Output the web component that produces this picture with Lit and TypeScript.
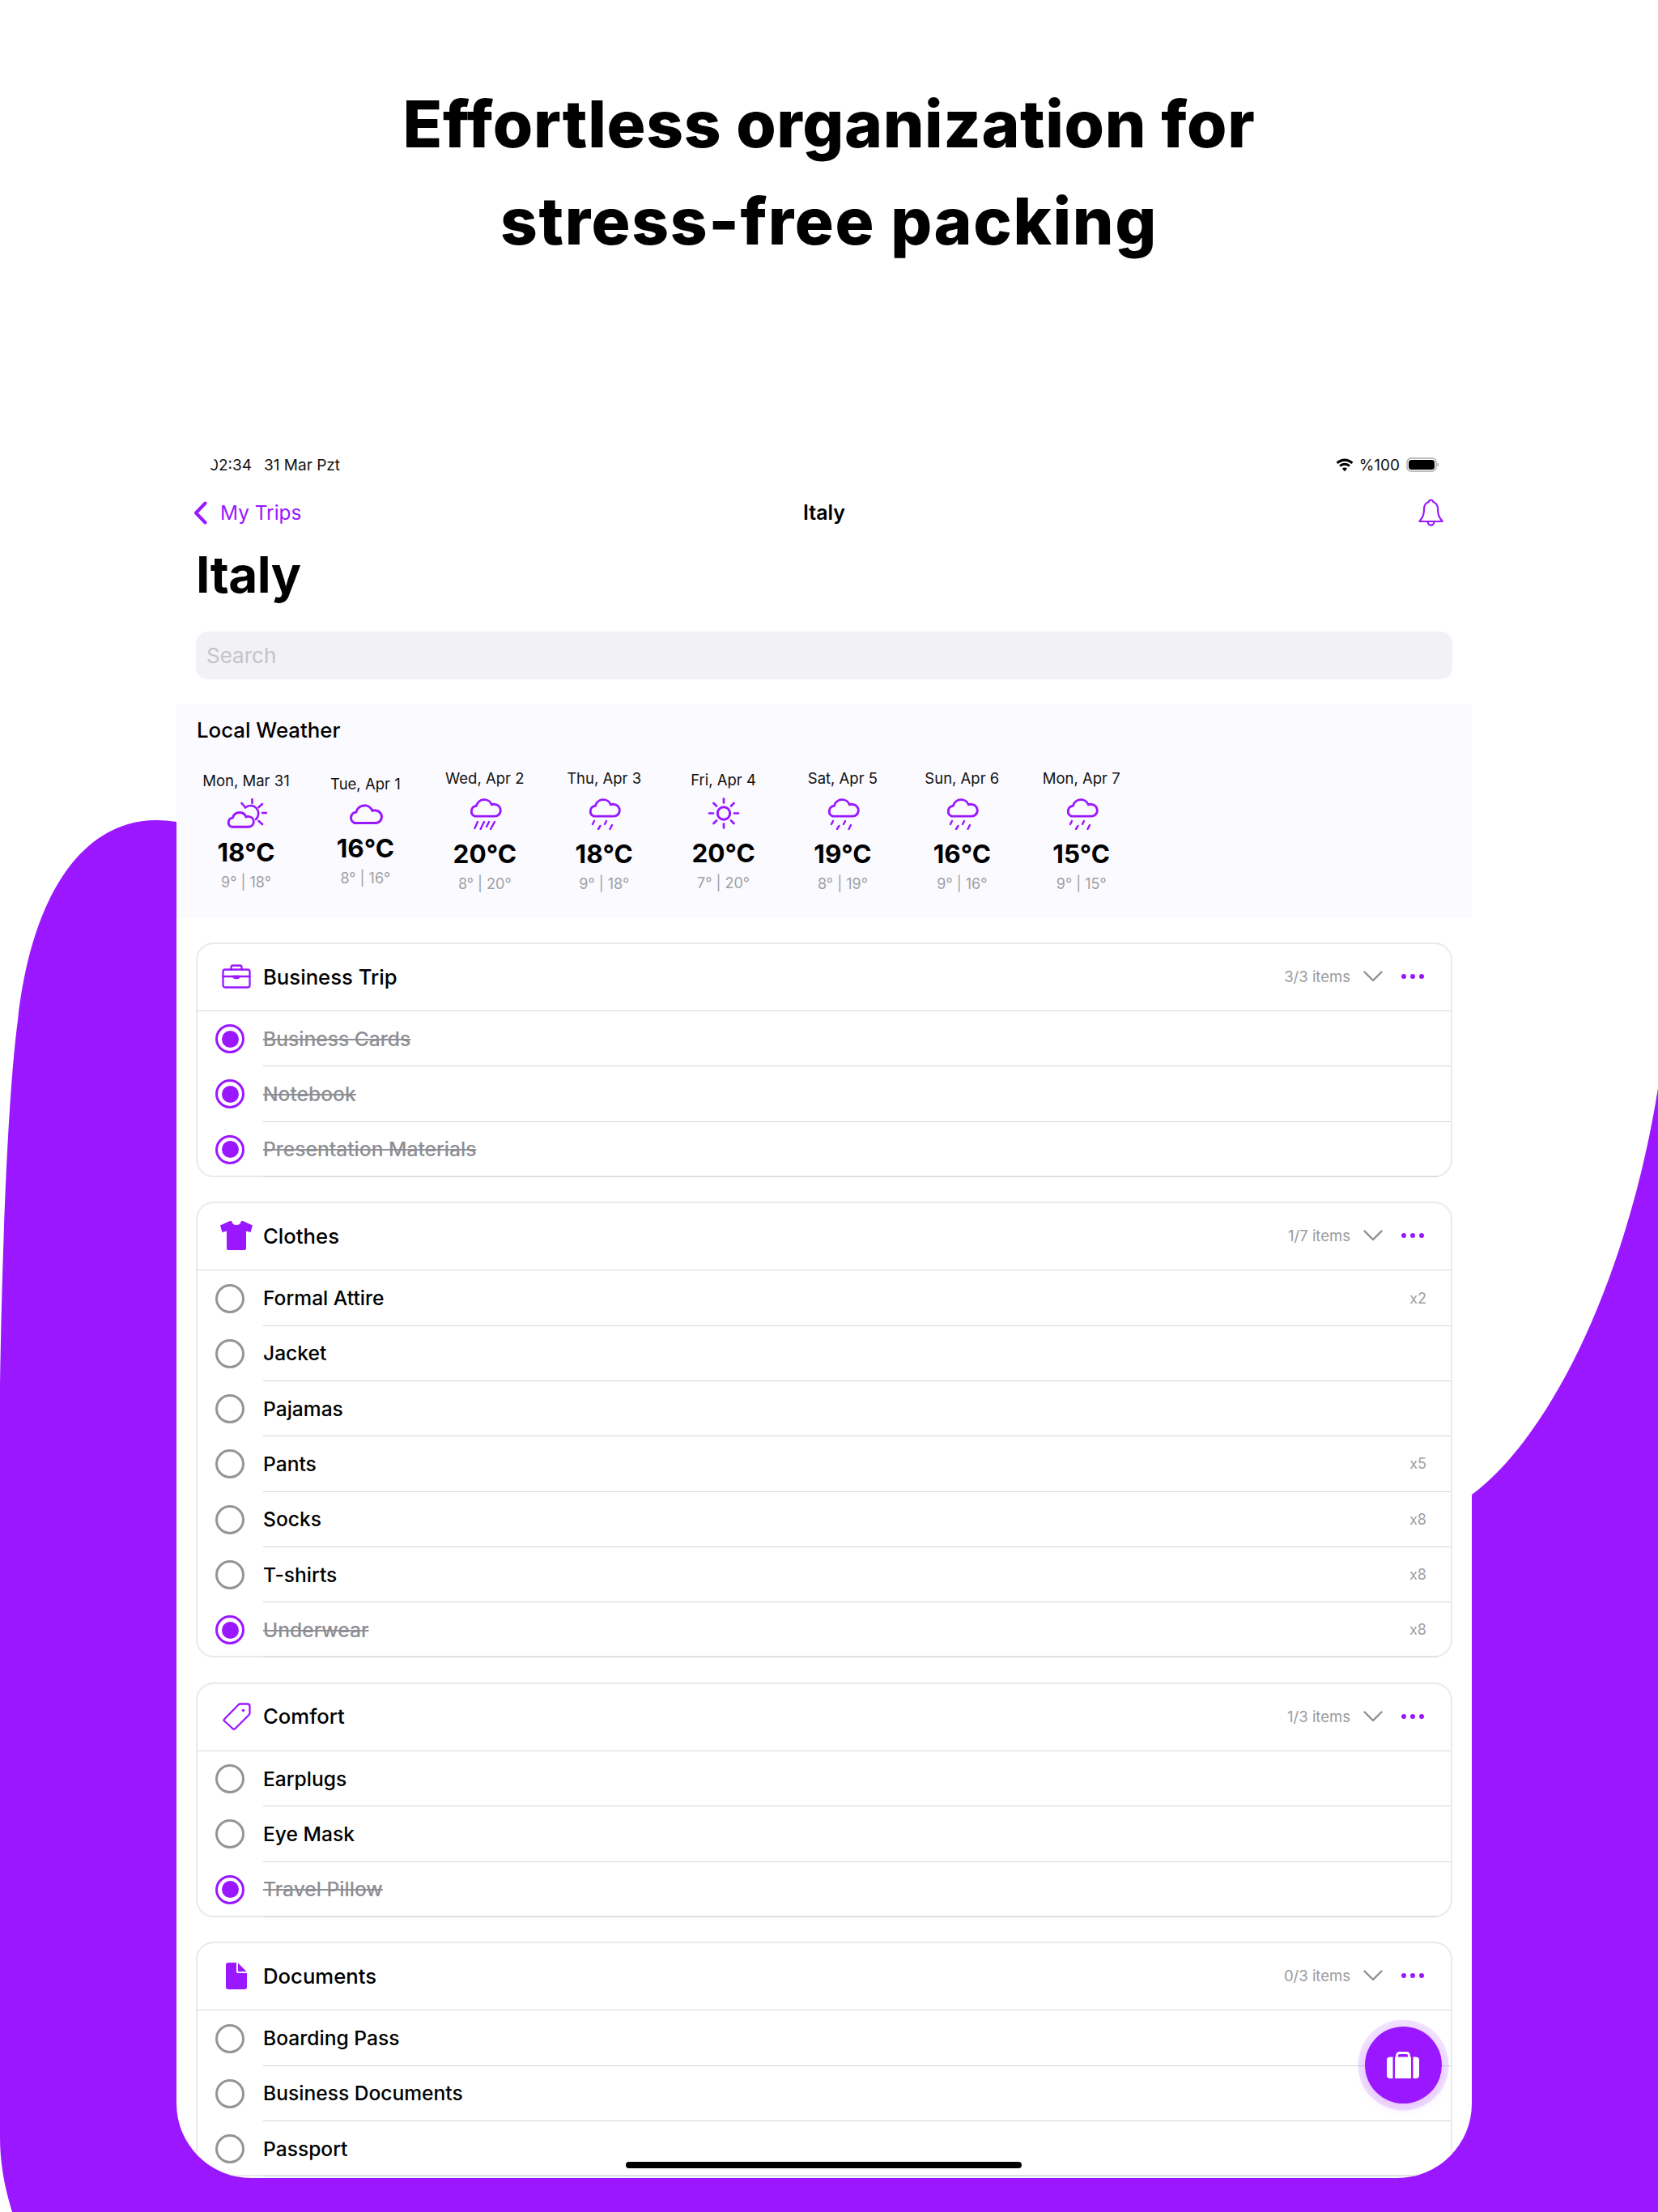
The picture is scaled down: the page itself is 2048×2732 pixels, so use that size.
import { LitElement, html, css, svg } from "lit";
import { customElement } from "lit/decorators.js";

const P = "#9a17ff";
const CLOUD = "M9 26.5H35A7.7 7.7 0 0 0 36 11.2Q33 10.2 31 11.5A10.5 10.5 0 0 0 11 13A7 7 0 0 0 9 26.5Z";

const stroke = (w: number, h: number, body: unknown, sw = 3) => html`<svg width=${w} height=${h} viewBox="0 0 ${w} ${h}" fill="none" stroke=${P} stroke-width=${sw} stroke-linecap="round" stroke-linejoin="round">${body}</svg>`;

const icons: Record<string, () => unknown> = {
  partly: () => stroke(52, 37, svg`
    <path d="M25 11.5A9.5 9.5 0 1 1 38 26" stroke-width="2.6"/>
    <path d="M33.5 1V6M46 7L41.5 11M46 18H51M41.5 28L46 32M20.5 6L24 10" stroke-width="2.6"/>
    <path transform="translate(0.5 13.5) scale(.82)" d=${CLOUD} fill="#fafaff" stroke-width="3.500"/>`),
  cloud: () => stroke(44, 28, svg`<path d=${CLOUD}/>`),
  heavy: () => stroke(42, 42, svg`
    <path transform="scale(.95)" d=${CLOUD} stroke-width="3"/>
    <path d="M12 32L8.500 40M20 32L15.600 41M26 32L23 38M33 32L28 41" stroke-width="2.400"/>`),
  light: () => stroke(42, 42, svg`
    <path transform="scale(.95)" d=${CLOUD} stroke-width="3"/>
    <path d="M9 31L7 35M16.500 37L14 41M24 31L22 35M31 36L28.500 41" stroke-width="2.400"/>`),
  sun: () => stroke(40, 39, svg`
    <circle cx="20" cy="19.500" r="7.700"/>
    <path d="M20 1.500V6.500M20 32.500V37.500M2 19.500H7M33 19.500H38M7.500 7L11 10.500M29 28.500L32.500 32M32.500 7L29 10.500M11 28.500L7.500 32" stroke-width="2.700"/>`),
  briefcase: () => stroke(36, 30, svg`
    <rect x="1.500" y="6.500" width="33" height="22" rx="2.500"/>
    <path d="M11.500 6.500V3.500Q11.500 1.500 13.500 1.500H22.500Q24.500 1.500 24.500 3.500V6.500"/>
    <path d="M1.500 15H14.500M21.500 15H34.500"/>
    <path d="M14.500 14H21.500V17Q18 19 14.500 17Z" fill=${P} stroke-width="1"/>`, 2.300),
  shirt: () => html`<svg width="40" height="36" viewBox="0 0 40 36"><path fill=${P} d="M12 0L0 5.500L2.500 14L8 12.500V34Q8 36 10 36H30Q32 36 32 34V12.500L37.500 14L40 5.500L28 0H26Q25 5 20 5Q15 5 14 0Z"/></svg>`,
  tag: () => stroke(35, 34, svg`
    <path d="M2 20.500L19.500 2.500Q20.500 1.500 22 1.500H30.500Q33.500 1.500 33.500 4.500V12.500Q33.500 14 32.500 15L15.500 32Q14 33.200 12.500 32L2 22.500Q1 21.500 2 20.500Z"/>
    <circle cx="25.500" cy="9.500" r="1.800" fill=${P} stroke="none"/>`, 2.300),
  doc: () => html`<svg width="26" height="33" viewBox="0 0 26 33"><path fill=${P} d="M3 0H13V11Q13 13 15 13H26V30Q26 33 23 33H3Q0 33 0 30V3Q0 0 3 0Z"/><path fill=${P} d="M15 .5L25.500 11H15Z"/></svg>`,
};

const days = [
  ["Mon, Mar 31", "partly", "18°C", "9° | 18°"],
  ["Tue, Apr 1", "cloud", "16°C", "8° | 16°"],
  ["Wed, Apr 2", "heavy", "20°C", "8° | 20°"],
  ["Thu, Apr 3", "light", "18°C", "9° | 18°"],
  ["Fri, Apr 4", "sun", "20°C", "7° | 20°"],
  ["Sat, Apr 5", "light", "19°C", "8° | 19°"],
  ["Sun, Apr 6", "light", "16°C", "9° | 16°"],
  ["Mon, Apr 7", "light", "15°C", "9° | 15°"],
];

type Item = { n: string; d?: boolean; q?: string };
const groups: { t: string; i: string; c: string; items: Item[] }[] = [
  { t: "Business Trip", i: "briefcase", c: "3/3 items", items: [
    { n: "Business Cards", d: true }, { n: "Notebook", d: true }, { n: "Presentation Materials", d: true } ] },
  { t: "Clothes", i: "shirt", c: "1/7 items", items: [
    { n: "Formal Attire", q: "x2" }, { n: "Jacket" }, { n: "Pajamas" }, { n: "Pants", q: "x5" },
    { n: "Socks", q: "x8" }, { n: "T-shirts", q: "x8" }, { n: "Underwear", d: true, q: "x8" } ] },
  { t: "Comfort", i: "tag", c: "1/3 items", items: [
    { n: "Earplugs" }, { n: "Eye Mask" }, { n: "Travel Pillow", d: true } ] },
  { t: "Documents", i: "doc", c: "0/3 items", items: [
    { n: "Boarding Pass" }, { n: "Business Documents" }, { n: "Passport" } ] },
];

@customElement("app-root")
export class AppRoot extends LitElement {
  static styles = css`
    :host { --p: #9a17ff; display: block; position: relative; width: 2048px; height: 2732px; overflow: hidden; background: #fff;
      font-family: Inter, "Liberation Sans", sans-serif; color: #000; }
    .blob { position: absolute; inset: 0; }
    .page { position: relative; display: flex; flex-direction: column; align-items: center; }
    h1 { margin: 0; padding-top: 93px; font-size: 80px; line-height: 120px; font-weight: 800; text-align: center; letter-spacing: .6px; }
    h1 span { letter-spacing: 1.600px; }
    .device { position: relative; box-sizing: border-box; width: 1600px; height: 2146px; margin: 211px 12px 0 0; background: #fff;
      border-radius: 0 0 92px 92px; overflow: hidden; display: flex; flex-direction: column; }
    .status { height: 60px; flex: none; display: flex; align-items: center; padding: 0 40px; font-size: 19px; color: #111; }
    .clock { display: block; margin-right: 15px; clip-path: polygon(6.500px 0, 100% 0, 100% 100%, 0 100%, 0 68%, 6.500px 68%); }
    .status-right { margin-left: auto; display: flex; align-items: center; gap: 6px; }
    .status-right span { margin-right: 2px; }
    .nav { height: 58px; flex: none; display: grid; grid-template-columns: 1fr auto 1fr; align-items: center; padding: 0 35px; font-size: 24.400px; }
    .back { display: flex; align-items: center; gap: 16px; color: var(--p); margin-left: -14px; }
    .nav-title { font-weight: 600; font-size: 25px; }
    .bell { justify-self: end; display: flex; }
    .title { flex: none; height: 96px; line-height: 96px; margin: 0; padding-left: 24px; font-size: 62px; font-weight: 700; letter-spacing: -0.5px; }
    .search { flex: none; height: 59px; margin: 22px 24px 0 24px; padding-left: 13px; border-radius: 15px; background: #f1f1f6; display: flex; align-items: center; font-size: 26px; color: #c4c4c8; }
    .weather { flex: none; box-sizing: border-box; height: 263px; margin-top: 31px; padding-top: 18px; background: #fafaff; }
    .weather h2 { margin: 0; padding-left: 25px; font-size: 25.800px; line-height: 28px; font-weight: 500; }
    .days { display: flex; align-items: center; height: 172px; margin-top: 24px; padding-left: 12.300px; }
    .day { width: 147.400px; flex: none; display: flex; flex-direction: column; align-items: center; }
    .date { font-size: 18.500px; line-height: 26px; color: #111; }
    .day svg { margin-top: 9px; display: block; }
    .temp { margin-top: 10px; font-size: 31.500px; line-height: 40px; font-weight: 700; }
    .range { margin-top: 5px; font-size: 18px; line-height: 24px; color: #a0a0a4; }
    .cards { display: flex; flex-direction: column; gap: 30.500px; margin: 31px 24px 0 24px; }
    .card { flex: none; border: 2px solid #e9e9ee; border-radius: 22px; }
    .head { box-sizing: border-box; height: 83px; display: flex; align-items: center; border-bottom: 1.500px solid #dcdce0; padding: 0 33px 2px 0; }
    .head-icon { width: 92px; padding-left: 4px; box-sizing: border-box; flex: none; display: flex; justify-content: center; }
    .head-icon svg { display: block; }
    .head-title { font-size: 25.700px; font-weight: 500; margin-left: -11px; }
    .count { margin-left: auto; font-size: 18.500px; color: #9a9a9e; }
    .chev { margin-left: 16px; display: block; }
    .dots { margin-left: 23px; display: flex; gap: 5px; }
    .dots i { width: 6px; height: 6px; border-radius: 50%; background: var(--p); display: block; }
    .rows { margin-bottom: -2px; position: relative; overflow: hidden; border-radius: 0 0 21px 21px; }
    .row { height: 68.300px; display: flex; align-items: stretch; box-sizing: border-box; }
    .check-col { width: 81px; flex: none; display: flex; align-items: center; }
    .check { box-sizing: border-box; width: 36px; height: 36px; margin-left: 22px; border-radius: 50%; border: 3px solid #949499; display: flex; align-items: center; justify-content: center; }
    .row.done .check { border-color: var(--p); }
    .row.done .check::after { content: ""; width: 21px; height: 21px; border-radius: 50%; background: var(--p); }
    .body { flex: 1; display: flex; align-items: center; justify-content: space-between; border-bottom: 1.500px solid #d4d4d8; padding-right: 30px; font-size: 24.600px; font-weight: 500; color: #000; }
    .row.done .name { color: #8e8e93; text-decoration: line-through; text-decoration-thickness: 2px; }
    .qty { font-size: 18px; font-weight: 400; color: #a0a0a4; }
    .fab { position: absolute; right: 37.500px; bottom: 92.500px; width: 95px; height: 95px; border-radius: 50%; background: var(--p);
      box-shadow: 0 0 0 8.500px rgba(154, 23, 255, .13), 0 5px 14px rgba(154, 23, 255, .16); display: flex; align-items: center; justify-content: center; }
    .home { position: absolute; left: 555px; bottom: 12px; width: 489px; height: 8px; border-radius: 4px; background: #000; }
  `;

  render() {
    return html`
      <svg class="blob" width="2048" height="2732" viewBox="0 0 2048 2732">
        <path fill=${P} d="M15 2732C5 2700 0 2670 0 2640V1710C3 1530 10 1350 22 1260C40 1100 105 1013 193 1013Q205 1013 218 1015H1000V1846H1818C1920 1770 2012 1570 2048 1344V2732Z"/>
      </svg>
      <div class="page">
        <h1>Effortless organization for<br /><span>stress-free packing</span></h1>
        <div class="device">
          <div class="status">
            <span class="clock">02:34</span>
            <span>31 Mar Pzt</span>
            <div class="status-right">
              <svg width="24" height="17" viewBox="0 0 22 16"><path d="M11 3.500C14 3.500 16.800 4.700 18.800 6.700L20.800 4.600C18.200 2 14.800.5 11 .5S3.800 2 1.200 4.600L3.200 6.700C5.200 4.700 8 3.500 11 3.500ZM11 8.200C12.700 8.200 14.300 8.900 15.500 10L17.500 8C15.800 6.300 13.500 5.300 11 5.300S6.200 6.300 4.500 8L6.500 10C7.700 8.900 9.300 8.200 11 8.200ZM11 10.800C9.900 10.800 8.900 11.200 8.100 12L11 15.200L13.900 12C13.100 11.200 12.100 10.800 11 10.800Z" fill="#000"/></svg>
              <span>%100</span>
              <svg width="41" height="18" viewBox="0 0 41 18"><rect x="1" y="1" width="36" height="16" rx="5" fill="none" stroke="#a8a8a8" stroke-width="1.400"/><rect x="3" y="3" width="32" height="12" rx="3.500" fill="#000"/><rect x="38.500" y="7" width="1.500" height="4" rx=".7" fill="#a8a8a8"/></svg>
            </div>
          </div>
          <div class="nav">
            <div class="back">
              <svg width="17" height="29" viewBox="0 0 17 29" fill="none" stroke=${P} stroke-width="4" stroke-linecap="round" stroke-linejoin="round"><path d="M14.500 2.500L3 14.500L14.500 26.500"/></svg>
              <span>My Trips</span>
            </div>
            <div class="nav-title">Italy</div>
            <div class="bell">
              <svg width="31" height="34" viewBox="0 0 31 34" fill="none" stroke=${P} stroke-width="2.200" stroke-linecap="round" stroke-linejoin="round"><path d="M15.500 1.500C13.800 1.500 13 2.700 12.600 4C9 5.200 7 8.300 7 12.500C7 17.500 6.500 21 3.800 24.500C3 25.500 1.500 27 1.500 28H29.500C29.500 27 28 25.500 27.200 24.500C24.500 21 24 17.500 24 12.500C24 8.300 22 5.200 18.400 4C18 2.700 17.200 1.500 15.500 1.500Z"/><path d="M11.500 28C11.500 30.800 13.300 32.700 15.500 32.700S19.500 30.800 19.500 28"/></svg>
            </div>
          </div>
          <h2 class="title">Italy</h2>
          <div class="search">Search</div>
          <div class="weather">
            <h2>Local Weather</h2>
            <div class="days">
              ${days.map(d => html`<div class="day">
                <div class="date">${d[0]}</div>
                ${icons[d[1]]()}
                <div class="temp">${d[2]}</div>
                <div class="range">${d[3]}</div>
              </div>`)}
            </div>
          </div>
          <div class="cards">
            ${groups.map(g => html`<section class="card">
              <div class="head">
                <div class="head-icon">${icons[g.i]()}</div>
                <div class="head-title">${g.t}</div>
                <div class="count">${g.c}</div>
                <svg class="chev" width="24" height="14" viewBox="0 0 24 14" fill="none" stroke="#8e8e93" stroke-width="2.400" stroke-linecap="round" stroke-linejoin="round"><path d="M1.500 1.500L12 12L22.500 1.500"/></svg>
                <div class="dots"><i></i><i></i><i></i></div>
              </div>
              <div class="rows">
                ${g.items.map(it => html`<div class="row ${it.d ? "done" : ""}">
                  <div class="check-col"><div class="check"></div></div>
                  <div class="body"><span class="name">${it.n}</span>${it.q ? html`<span class="qty">${it.q}</span>` : ""}</div>
                </div>`)}
              </div>
            </section>`)}
          </div>
          <div class="fab">
            <svg width="40" height="33" viewBox="0 0 40 33"><path fill="#fff" d="M10 6.500H30V33H10ZM7.500 6.500V33H4Q0 33 0 29V10.500Q0 6.500 4 6.500ZM32.500 6.500H36Q40 6.500 40 10.500V29Q40 33 36 33H32.500Z"/><path d="M12.500 7V5Q12.500 1.500 16 1.500H24Q27.500 1.500 27.500 5V7" fill="none" stroke="#fff" stroke-width="2.800"/></svg>
          </div>
          <div class="home"></div>
        </div>
      </div>
    `;
  }
}
